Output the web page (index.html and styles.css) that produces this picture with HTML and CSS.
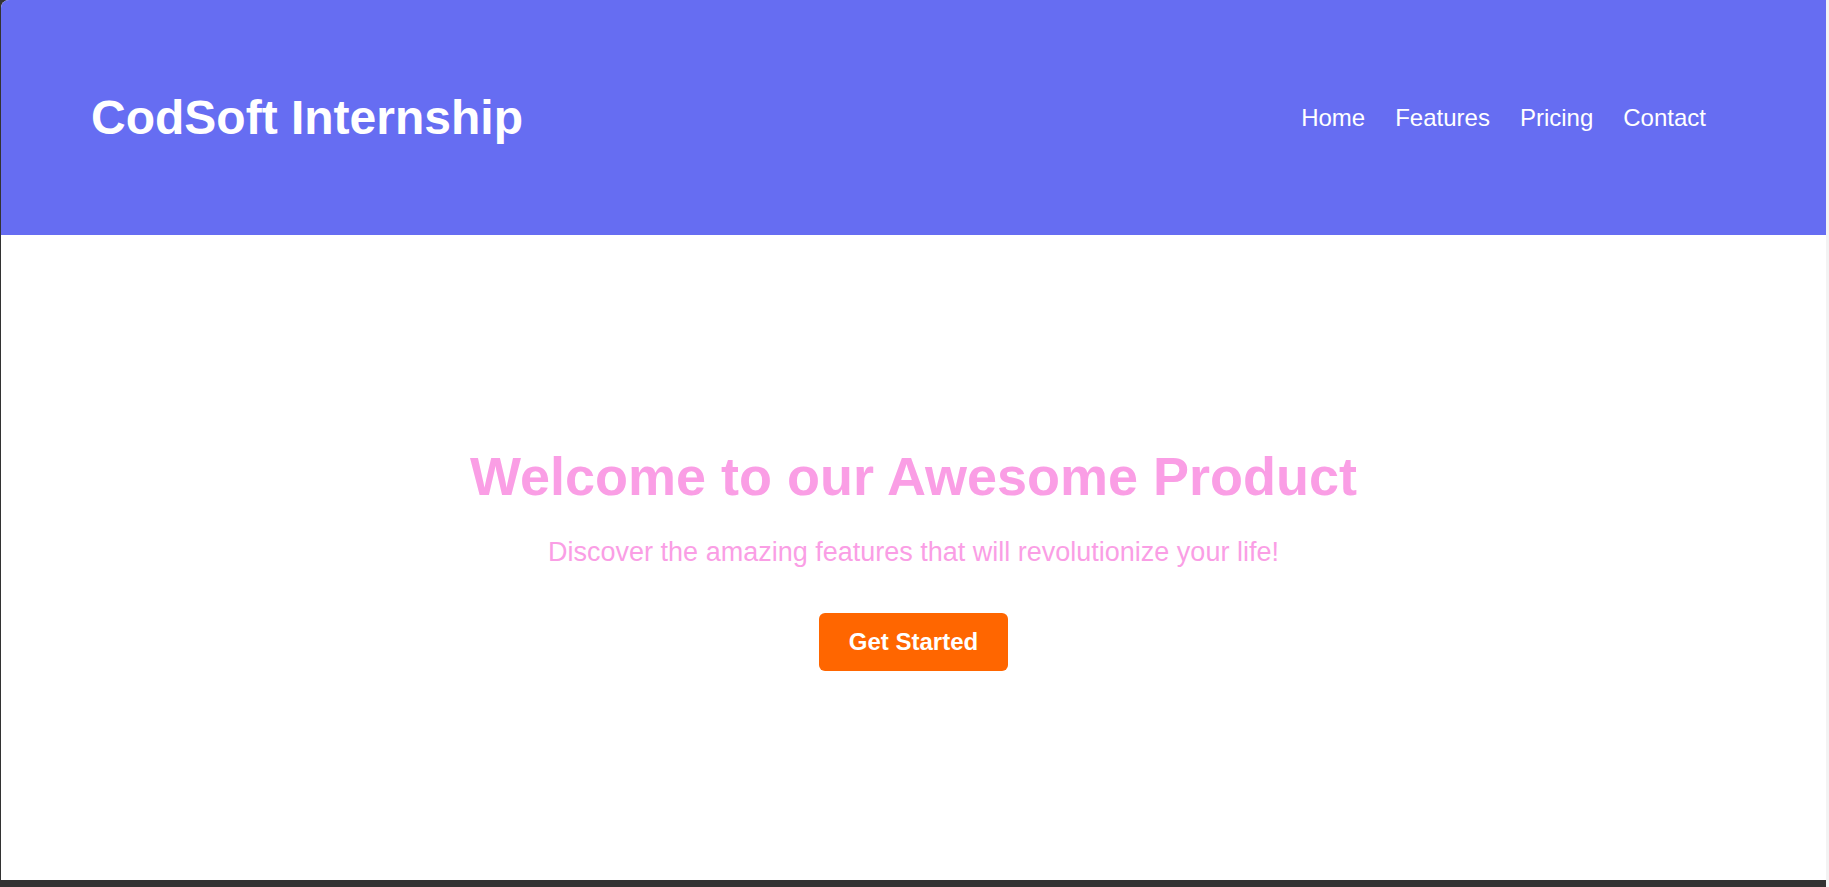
FILE: index.html
```html
<!DOCTYPE html>
<html lang="en">
<head>
<meta charset="utf-8">
<title>CodSoft Internship</title>
<link rel="stylesheet" href="styles.css">
</head>
<body>
<div class="frame">
  <div class="window">
    <header class="site-header">
      <h1 class="logo">CodSoft Internship</h1>
      <nav class="nav">
        <ul class="nav-list">
          <li><a href="#">Home</a></li>
          <li><a href="#">Features</a></li>
          <li><a href="#">Pricing</a></li>
          <li><a href="#">Contact</a></li>
        </ul>
      </nav>
    </header>
    <main class="hero">
      <h2 class="hero-title">Welcome to our Awesome Product</h2>
      <p class="hero-text">Discover the amazing features that will revolutionize your life!</p>
      <a class="cta" href="#">Get Started</a>
    </main>
  </div>
</div>
<div class="edge"></div>
</body>
</html>
```

FILE: styles.css
```css
* {
  box-sizing: border-box;
}

html, body {
  margin: 0;
  padding: 0;
  height: 887px;
  overflow: hidden;
}

body {
  display: flex;
  background: #333333;
  font-family: "Liberation Sans", Arial, sans-serif;
}

.frame {
  width: 1826px;
  height: 887px;
  padding: 0 0 7px 1px;
  background: #333333;
}

.edge {
  width: 3px;
  height: 887px;
  background: #f3f3f3;
}

.window {
  height: 880px;
  background: #ffffff;
  border-top-left-radius: 8px;
  overflow: hidden;
  display: flex;
  flex-direction: column;
}

.site-header {
  height: 235px;
  flex: none;
  background: #666df2;
  color: #ffffff;
  display: flex;
  align-items: center;
  justify-content: space-between;
  padding: 0 90px;
}

.logo {
  margin: 0;
  font-size: 48px;
  font-weight: bold;
}

.nav-list {
  list-style: none;
  margin: 0;
  padding: 0;
  display: flex;
}

.nav-list li {
  margin-right: 30px;
}

.nav-list a {
  color: #ffffff;
  text-decoration: none;
  font-size: 24px;
}

.hero {
  flex: 1;
  display: flex;
  flex-direction: column;
  align-items: center;
  justify-content: center;
  text-align: center;
}

.hero-title {
  margin: 0;
  font-size: 54px;
  font-weight: bold;
  color: #fa9ee5;
}

.hero-text {
  margin: 30px 0 0;
  font-size: 27px;
  color: #fa9ee5;
}

.cta {
  margin-top: 45px;
  display: inline-block;
  padding: 15px 30px;
  background: #ff6600;
  color: #ffffff;
  font-size: 24px;
  font-weight: bold;
  text-decoration: none;
  border-radius: 6px;
}
```
